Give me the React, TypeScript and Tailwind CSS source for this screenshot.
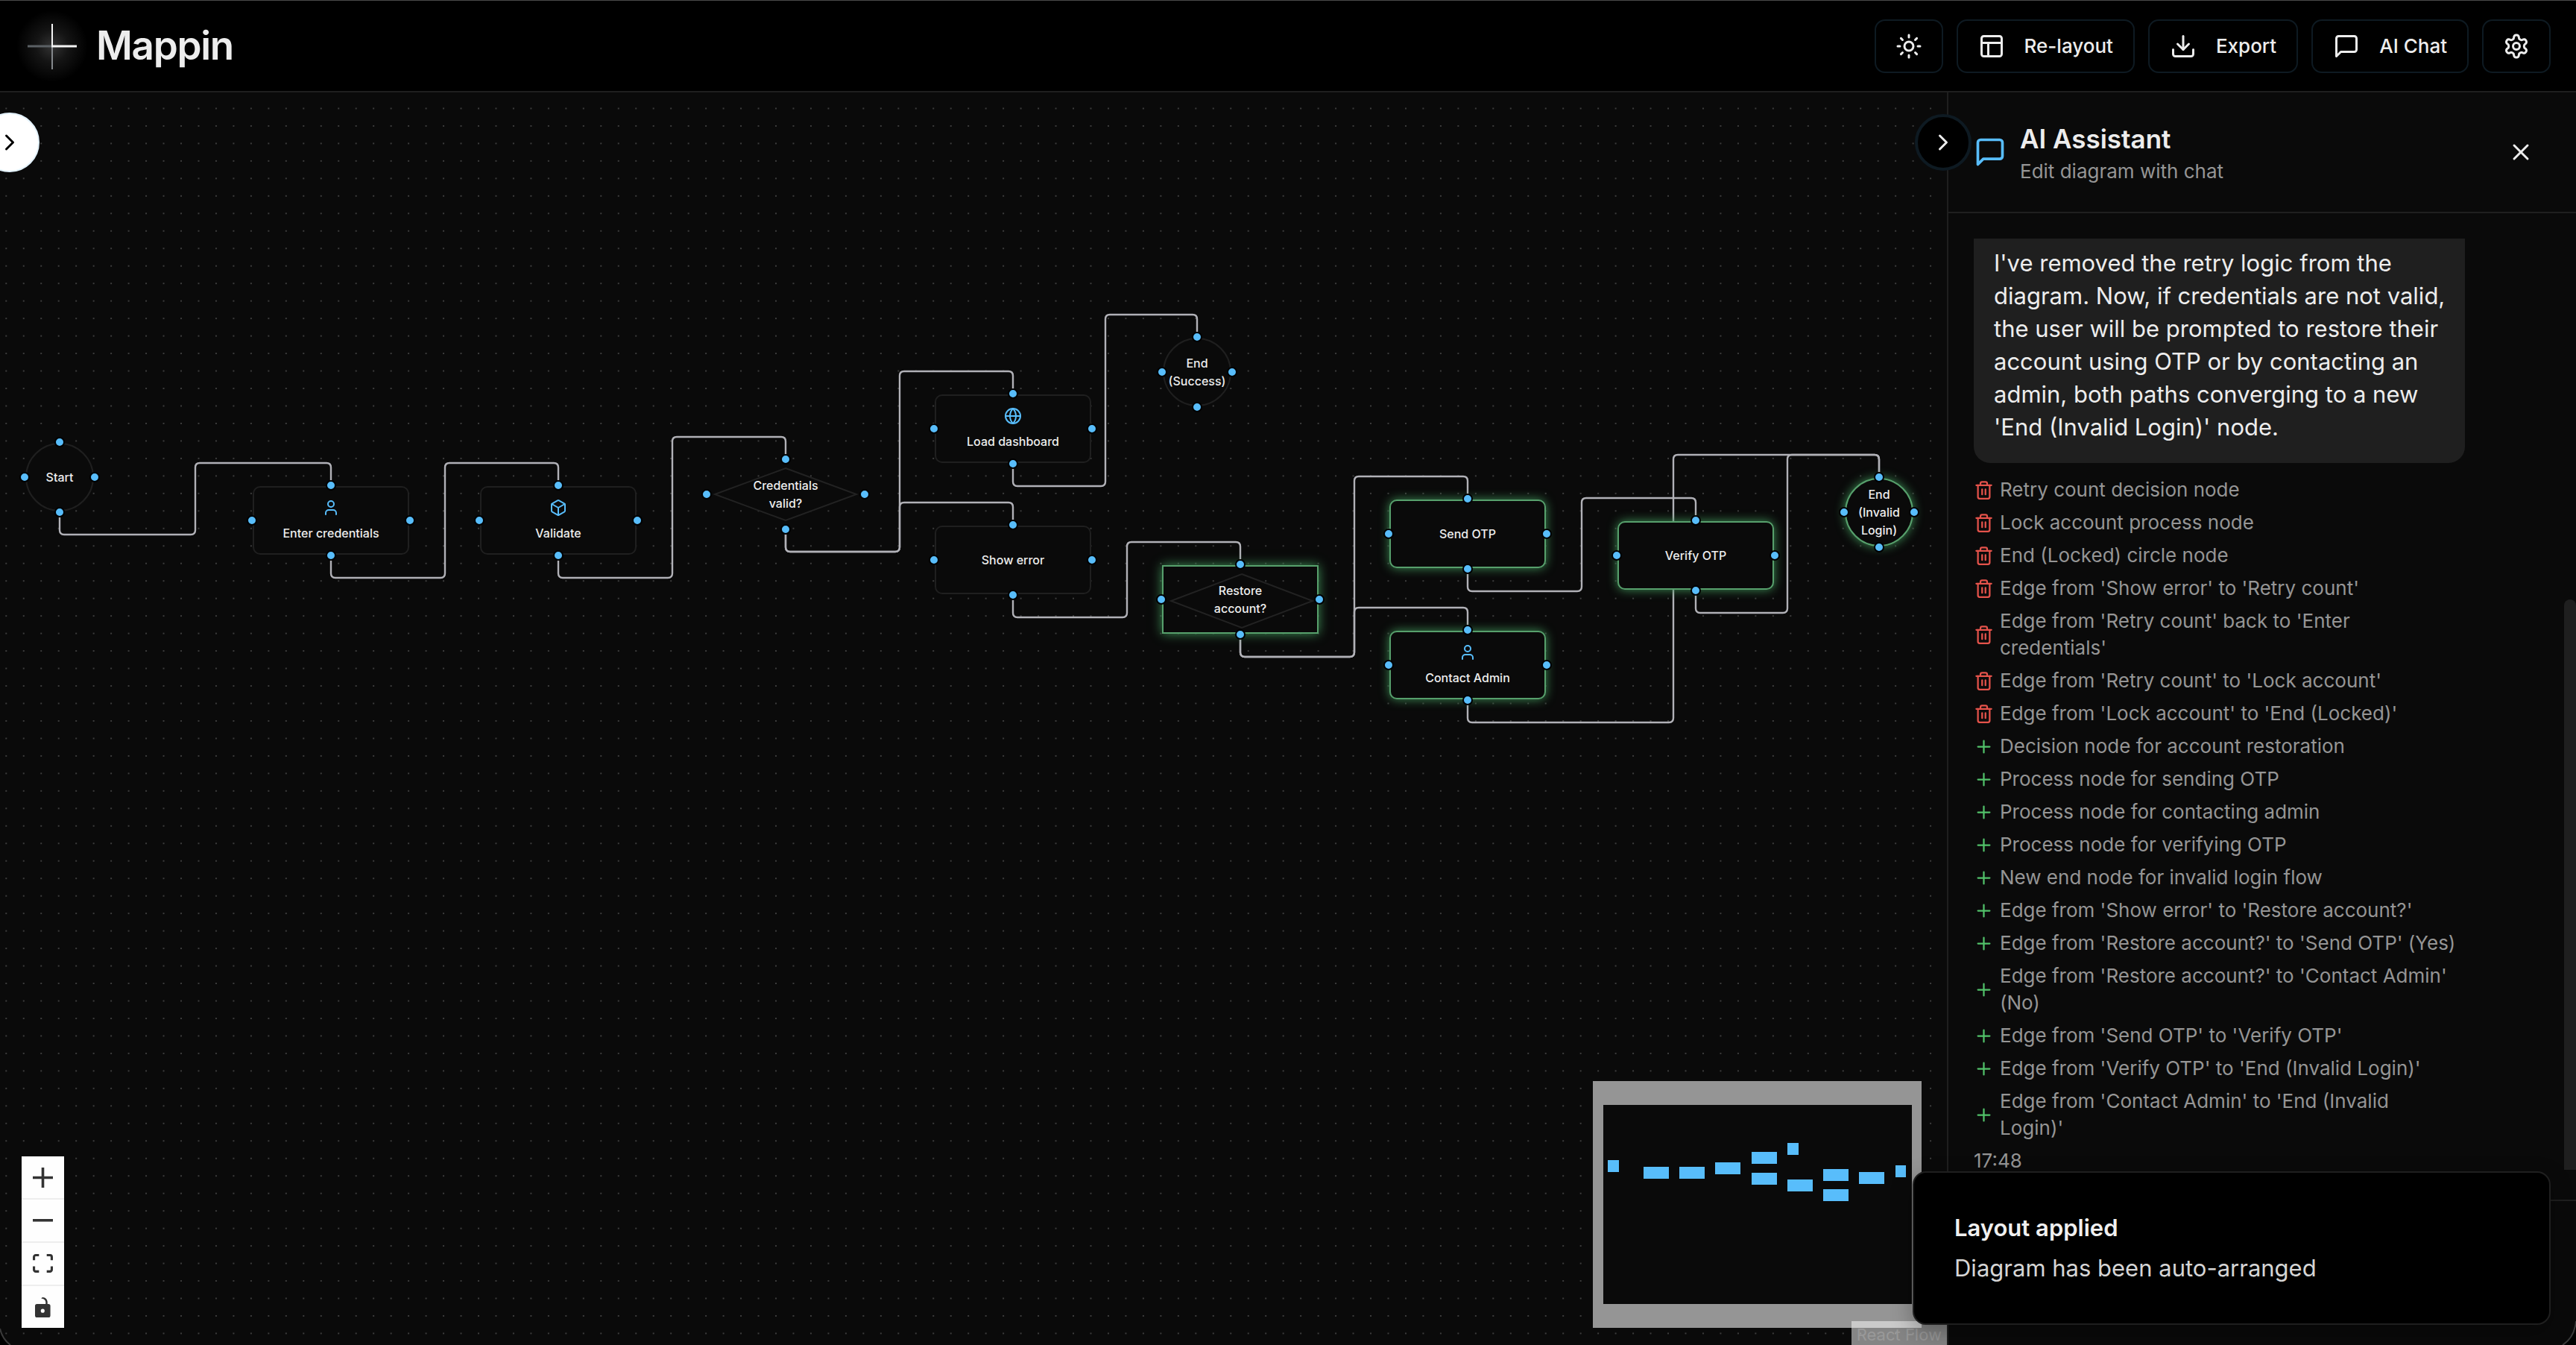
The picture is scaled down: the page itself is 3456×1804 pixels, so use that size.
import React from "react";
import { Box, ChevronRight, Download, Globe, PanelsTopLeft, Plus, Sun, Trash2, User, X } from "lucide-react";

type Shape = "circle" | "box" | "diamond";
type FlowNode = {
  id: string;
  x: number;
  y: number;
  shape: Shape;
  lines: string[];
  icon?: "user" | "box" | "globe";
  added?: boolean;
};

const NODE_W = 212;
const NODE_H = 94;

const nodes: FlowNode[] = [
  { id: "start", x: 80, y: 516, shape: "circle", lines: ["Start"] },
  { id: "enter", x: 444, y: 574, shape: "box", lines: ["Enter credentials"], icon: "user" },
  { id: "validate", x: 749, y: 574, shape: "box", lines: ["Validate"], icon: "box" },
  { id: "valid", x: 1054, y: 539, shape: "diamond", lines: ["Credentials", "valid?"] },
  { id: "load", x: 1359, y: 451, shape: "box", lines: ["Load dashboard"], icon: "globe" },
  { id: "success", x: 1606, y: 375, shape: "circle", lines: ["End", "(Success)"] },
  { id: "error", x: 1359, y: 627, shape: "box", lines: ["Show error"] },
  { id: "restore", x: 1664, y: 680, shape: "diamond", lines: ["Restore", "account?"], added: true },
  { id: "send", x: 1969, y: 592, shape: "box", lines: ["Send OTP"], added: true },
  { id: "contact", x: 1969, y: 768, shape: "box", lines: ["Contact Admin"], icon: "user", added: true },
  { id: "verify", x: 2275, y: 621, shape: "box", lines: ["Verify OTP"], added: true },
  { id: "invalid", x: 2521, y: 563, shape: "circle", lines: ["End", "(Invalid", "Login)"], added: true },
];

const edges: [string, string][] = [
  ["start", "enter"],
  ["enter", "validate"],
  ["validate", "valid"],
  ["valid", "load"],
  ["valid", "error"],
  ["load", "success"],
  ["error", "restore"],
  ["restore", "send"],
  ["restore", "contact"],
  ["send", "verify"],
  ["verify", "invalid"],
  ["contact", "invalid"],
];

// Smooth-step route: down from the source, across, up, across, down into the target.
function edgePath(from: string, to: string) {
  const a = nodes.find((n) => n.id === from)!;
  const b = nodes.find((n) => n.id === to)!;
  const r = 6;
  const mid = Math.round((a.x + b.x) / 2);
  const low = a.y + 77;
  const high = b.y - 77;
  return [
    `M${a.x} ${a.y + 52}V${low - r}Q${a.x} ${low} ${a.x + r} ${low}`,
    `H${mid - r}Q${mid} ${low} ${mid} ${low - r}`,
    `V${high + r}Q${mid} ${high} ${mid + r} ${high}`,
    `H${b.x - r}Q${b.x} ${high} ${b.x} ${high + r}V${b.y - 52}`,
  ].join("");
}

function MessageIcon({ className }: { className: string }) {
  return (
    <svg viewBox="0 0 24 24" fill="none" stroke="currentColor" strokeWidth="2" strokeLinecap="round" strokeLinejoin="round" className={className}>
      <path d="M21 15a2 2 0 0 1-2 2H7l-4 4V5a2 2 0 0 1 2-2h14a2 2 0 0 1 2 2z" />
    </svg>
  );
}

function GearIcon({ className }: { className: string }) {
  return (
    <svg viewBox="0 0 24 24" fill="none" stroke="currentColor" strokeWidth="2" strokeLinecap="round" strokeLinejoin="round" className={className}>
      <path d="M12.22 2h-.44a2 2 0 0 0-2 2v.18a2 2 0 0 1-1 1.73l-.43.25a2 2 0 0 1-2 0l-.15-.08a2 2 0 0 0-2.73.73l-.22.38a2 2 0 0 0 .73 2.73l.15.1a2 2 0 0 1 1 1.72v.51a2 2 0 0 1-1 1.74l-.15.09a2 2 0 0 0-.73 2.73l.22.38a2 2 0 0 0 2.73.73l.15-.08a2 2 0 0 1 2 0l.43.25a2 2 0 0 1 1 1.73V20a2 2 0 0 0 2 2h.44a2 2 0 0 0 2-2v-.18a2 2 0 0 1 1-1.73l.43-.25a2 2 0 0 1 2 0l.15.08a2 2 0 0 0 2.73-.73l.22-.39a2 2 0 0 0-.73-2.73l-.15-.08a2 2 0 0 1-1-1.74v-.5a2 2 0 0 1 1-1.74l.15-.09a2 2 0 0 0 .73-2.73l-.22-.38a2 2 0 0 0-2.73-.73l-.15.08a2 2 0 0 1-2 0l-.43-.25a2 2 0 0 1-1-1.73V4a2 2 0 0 0-2-2z" />
      <circle cx="12" cy="12" r="3" />
    </svg>
  );
}

function Logo() {
  return (
    <svg viewBox="0 0 112 112" className="size-28 shrink-0" aria-hidden="true">
      <defs>
        <radialGradient id="glow">
          <stop offset="0" stopColor="#fff" stopOpacity="0.2" />
          <stop offset="0.45" stopColor="#fff" stopOpacity="0.08" />
          <stop offset="1" stopColor="#fff" stopOpacity="0" />
        </radialGradient>
      </defs>
      <circle cx="56" cy="56" r="48" fill="url(#glow)" />
      <path d="M56 56H23" stroke="#5b6064" strokeWidth="3" />
      <path d="M56 56V87" stroke="#84888c" strokeWidth="2" />
      <path d="M56 57V26" stroke="#f4f4f4" strokeWidth="2" />
      <path d="M55 56H89" stroke="#f4f4f4" strokeWidth="3" />
    </svg>
  );
}

const textButton =
  "flex h-[72px] items-center gap-[26px] rounded-[14px] border-2 border-[#0e1a22] bg-black px-[27px] text-[26px] font-medium text-[#ededed]";
const iconButton =
  "flex h-[72px] w-[92px] items-center justify-center rounded-[14px] border-2 border-[#0e1a22] bg-black text-[#ededed]";

function Header() {
  return (
    <header className="flex h-[124px] shrink-0 items-center justify-between border-t border-b-2 border-t-[#4a4a4a] border-b-[#1f1f1f] bg-black pr-[34px] pl-[14px]">
      <div className="flex items-center gap-[3px]">
        <Logo />
        <h1 className="text-[53px] font-semibold tracking-tight text-[#ededed]">Mappin</h1>
      </div>
      <nav className="flex items-center gap-[18px]">
        <button aria-label="Toggle theme" className={iconButton}>
          <Sun className="size-9" />
        </button>
        <button className={textButton}>
          <PanelsTopLeft className="size-9" />
          Re-layout
        </button>
        <button className={textButton}>
          <Download className="size-9" />
          Export
        </button>
        <button className={textButton}>
          <MessageIcon className="size-9" />
          AI Chat
        </button>
        <button aria-label="Settings" className={iconButton}>
          <GearIcon className="size-9" />
        </button>
      </nav>
    </header>
  );
}

function Handles() {
  const dot = "absolute size-[14px] rounded-full border-2 border-black bg-[#58bdfb]";
  return (
    <>
      <span className={`${dot} -top-[7px] left-1/2 -ml-[7px]`} />
      <span className={`${dot} -bottom-[7px] left-1/2 -ml-[7px]`} />
      <span className={`${dot} top-1/2 -left-[7px] -mt-[7px]`} />
      <span className={`${dot} top-1/2 -right-[7px] -mt-[7px]`} />
    </>
  );
}

function NodeIcon({ icon }: { icon: FlowNode["icon"] }) {
  if (icon === "user") return <User className="size-6 text-[#58bdfb]" />;
  if (icon === "box") return <Box className="size-6 text-[#58bdfb]" />;
  if (icon === "globe") return <Globe className="size-6 text-[#58bdfb]" />;
  return null;
}

function DiagramNode({ node }: { node: FlowNode }) {
  const w = node.shape === "circle" ? NODE_H : NODE_W;
  const frame =
    node.shape === "diamond"
      ? node.added
        ? "border-2 border-[#57a06c] shadow-[0_0_14px_#3f8f57]"
        : ""
      : node.added
        ? "border-2 border-[#57a06c] bg-[#0a0a0a] shadow-[0_0_14px_#3f8f57]"
        : "border-2 border-[#1f1f1f] bg-[#0a0a0a]";
  const corner = node.shape === "circle" ? "rounded-full" : node.shape === "box" ? "rounded-[10px]" : "";
  return (
    <div className="absolute" style={{ left: node.x - w / 2, top: node.y - NODE_H / 2, width: w, height: NODE_H }}>
      <div className={`absolute inset-px ${frame} ${corner}`} />
      {node.shape === "diamond" && (
        <svg viewBox="0 0 212 94" className="absolute inset-0 size-full">
          <path d={node.added ? "M108 13L203 49L108 85L13 49Z" : "M106 12L201 47L106 82L11 47Z"} fill="#0a0a0a" stroke="#222" strokeWidth="2" />
        </svg>
      )}
      <div className="relative flex h-full flex-col items-center justify-center gap-[10px] text-center text-[16px] leading-6 font-medium text-[#ededed]">
        <NodeIcon icon={node.icon} />
        <p>
          {node.lines.map((l) => (
            <span key={l} className="block">
              {l}
            </span>
          ))}
        </p>
      </div>
      <Handles />
    </div>
  );
}

function Controls() {
  const cell = "flex h-[58px] w-[57px] items-center justify-center border-b-2 border-[#eeeeee] bg-[#fefefe] fill-[#333]";
  return (
    <div className="absolute bottom-[23px] left-[29px] flex flex-col">
      <button aria-label="Zoom in" className={cell}>
        <svg viewBox="0 0 32 32" className="w-[27px]">
          <path d="M32 18.133H18.133V32h-4.266V18.133H0v-4.266h13.867V0h4.266v13.867H32z" />
        </svg>
      </button>
      <button aria-label="Zoom out" className={cell}>
        <svg viewBox="0 0 32 5" className="w-[27px]">
          <path d="M0 0h32v4.2H0z" />
        </svg>
      </button>
      <button aria-label="Fit view" className={cell}>
        <svg viewBox="0 0 32 30" className="w-[27px]">
          <path d="M3.692 4.63c0-.53.4-.938.939-.938h5.215V0H4.708C2.13 0 0 2.054 0 4.63v5.216h3.692V4.631zM27.354 0h-5.2v3.692h5.17c.53 0 .984.4.984.939v5.215H32V4.631A4.624 4.624 0 0027.354 0zm.954 24.83c0 .532-.4.94-.939.94h-5.215v3.768h5.215c2.577 0 4.631-2.13 4.631-4.707v-5.139h-3.692v5.139zm-23.677.94c-.531 0-.939-.4-.939-.94v-5.138H0v5.139c0 2.577 2.13 4.707 4.708 4.707h5.138V25.77H4.631z" />
        </svg>
      </button>
      <button aria-label="Toggle interactivity" className="flex h-14 w-[57px] items-center justify-center bg-[#fefefe] fill-[#333]">
        <svg viewBox="0 0 25 32" className="h-[27px]">
          <path d="M21.333 10.667H19.81V7.619C19.81 3.429 16.38 0 12.19 0c-4.114 1.828-1.37 2.133.305 2.438 1.676.305 4.42 2.59 4.42 5.181v3.048H3.047A3.056 3.056 0 000 13.714v15.238A3.056 3.056 0 003.048 32h18.285a3.056 3.056 0 003.048-3.048V13.714a3.056 3.056 0 00-3.048-3.047zM12.19 24.533a3.056 3.056 0 01-3.047-3.047 3.056 3.056 0 013.047-3.048 3.056 3.056 0 013.048 3.048 3.056 3.056 0 01-3.048 3.047z" />
        </svg>
      </button>
    </div>
  );
}

const miniNodes: [number, number, number][] = [
  [20, 106, 15],
  [68, 115, 34],
  [116, 115, 34],
  [164, 109, 34],
  [213, 95, 34],
  [213, 123, 34],
  [261, 83, 15],
  [261, 132, 34],
  [309, 118, 34],
  [309, 145, 34],
  [357, 122, 34],
  [406, 113, 14],
];

function MiniMap() {
  return (
    <svg viewBox="0 0 441 331" className="absolute right-[34px] bottom-[23px] h-[331px] w-[441px]" role="img" aria-label="Mini map">
      <rect width="441" height="331" fill="#959595" />
      <rect x="14" y="32" width="414" height="267" fill="#0a0a0a" />
      {miniNodes.map(([x, y, w], i) => (
        <rect key={i} x={x} y={y} width={w} height="16" fill="#58bdfb" />
      ))}
    </svg>
  );
}

function Canvas() {
  return (
    <main className="relative min-w-0 flex-1 overflow-hidden">
      <svg className="absolute inset-0 size-full" aria-hidden="true">
        <defs>
          <pattern id="dots" x="7.3" y="20.5" width="23.471" height="23.471" patternUnits="userSpaceOnUse">
            <circle cx="1" cy="1" r="0.9" fill="#555" />
          </pattern>
        </defs>
        <rect width="100%" height="100%" fill="url(#dots)" />
        {edges.map(([a, b]) => (
          <path key={a + b} d={edgePath(a, b)} fill="none" stroke="#b1b1b7" strokeWidth="2.4" />
        ))}
      </svg>
      {nodes.map((n) => (
        <DiagramNode key={n.id} node={n} />
      ))}
      <button
        aria-label="Open sidebar"
        className="absolute top-[27px] -left-[27px] flex size-20 items-center justify-center rounded-full border-2 border-[#e3f2fc] bg-white text-black"
      >
        <ChevronRight className="size-9" />
      </button>
      <Controls />
      <MiniMap />
      <a
        href="https://reactflow.dev"
        className="absolute right-0 bottom-0 flex h-8 items-center bg-white/50 px-[7px] pt-1 text-[22px] leading-7 text-[#999]"
      >
        React Flow
      </a>
    </main>
  );
}

const removed = [
  "Retry count decision node",
  "Lock account process node",
  "End (Locked) circle node",
  "Edge from 'Show error' to 'Retry count'",
  "Edge from 'Retry count' back to 'Enter\ncredentials'",
  "Edge from 'Retry count' to 'Lock account'",
  "Edge from 'Lock account' to 'End (Locked)'",
];

const added = [
  "Decision node for account restoration",
  "Process node for sending OTP",
  "Process node for contacting admin",
  "Process node for verifying OTP",
  "New end node for invalid login flow",
  "Edge from 'Show error' to 'Restore account?'",
  "Edge from 'Restore account?' to 'Send OTP' (Yes)",
  "Edge from 'Restore account?' to 'Contact Admin'\n(No)",
  "Edge from 'Send OTP' to 'Verify OTP'",
  "Edge from 'Verify OTP' to 'End (Invalid Login)'",
  "Edge from 'Contact Admin' to 'End (Invalid\nLogin)'",
];

function ChatPanel() {
  return (
    <aside className="relative flex w-[844px] shrink-0 flex-col border-l-2 border-[#1f1f1f]">
      <div className="flex h-[162px] shrink-0 items-center justify-between border-b-2 border-[#1f1f1f] pr-[38px] pl-[34px]">
        <div className="flex items-center gap-[18px]">
          <MessageIcon className="size-11 text-[#58bdfb]" />
          <div className="pt-1">
            <h2 className="text-[35px] leading-[48px] font-semibold text-[#ededed]">AI Assistant</h2>
            <p className="text-[26px] leading-10 text-[#959595]">Edit diagram with chat</p>
          </div>
        </div>
        <button aria-label="Close chat" className="flex size-[72px] items-center justify-center text-[#ededed]">
          <X className="size-9" />
        </button>
      </div>

      <div className="flex min-h-0 flex-1 flex-col overflow-hidden px-[34px] py-[34px]">
        <div className="w-[659px]">
          <p className="rounded-b-[22px] bg-[#1f1f1f] pt-[11px] pr-5 pb-[26px] pl-[27px] text-[31px] leading-[44px] text-[#ededed]">
            I've removed the retry logic from the diagram. Now, if credentials are not valid, the user will be prompted to
            restore their account using OTP or by contacting an admin, both paths converging to a new 'End (Invalid
            Login)' node.
          </p>
          <ul className="mt-[18px] flex flex-col gap-2 text-[26px] leading-9 text-[#959595]">
            {removed.map((t) => (
              <li key={t} className="flex items-center gap-2">
                <Trash2 className="size-[27px] shrink-0 text-[#e5534b]" />
                <span className="whitespace-pre-line">{t}</span>
              </li>
            ))}
            {added.map((t) => (
              <li key={t} className="flex items-center gap-2">
                <Plus className="size-[27px] shrink-0 text-[#52c26a]" />
                <span className="whitespace-pre-line">{t}</span>
              </li>
            ))}
          </ul>
          <p className="mt-2 text-[26px] leading-9 text-[#959595]">17:48</p>
        </div>
      </div>
      <div className="absolute top-[680px] right-0 bottom-[235px] w-4 rounded-t-full bg-[#1f1f1f]" />
      <div className="h-[195px] shrink-0 border-t-2 border-[#1f1f1f]" />

      <button
        aria-label="Collapse chat"
        className="absolute top-[29px] -left-[45px] flex size-[76px] items-center justify-center rounded-full border-4 border-[#0e1a22] bg-black text-[#ededed]"
      >
        <ChevronRight className="size-9" />
      </button>
    </aside>
  );
}

function Toast() {
  return (
    <div
      role="status"
      className="absolute right-[34px] bottom-[27px] flex h-[206px] w-[856px] flex-col justify-center rounded-[18px] border-2 border-[#1f1f1f] bg-black px-[54px] shadow-[0_10px_30px_rgba(0,0,0,0.3)]"
    >
      <p className="text-[31px] leading-[54px] font-semibold text-[#f0f0f0]">Layout applied</p>
      <p className="text-[31px] leading-[54px] text-[#d5d5d5]">Diagram has been auto-arranged</p>
    </div>
  );
}

export default function App() {
  return (
    <div className="relative flex h-screen flex-col overflow-hidden bg-[#0a0a0a] font-['Inter',sans-serif]">
      <Header />
      <div className="flex min-h-0 flex-1">
        <Canvas />
        <ChatPanel />
      </div>
      <Toast />
      <svg viewBox="0 0 24 36" className="absolute bottom-0 left-0 h-9 w-6" aria-hidden="true">
        <path d="M0 14Q3 28 14 36H0Z" fill="#000" />
        <path d="M0 14Q3 28 14 36" fill="none" stroke="#3a3a3a" strokeWidth="2" />
      </svg>
      <svg viewBox="0 0 24 36" className="absolute right-0 bottom-0 h-9 w-6" aria-hidden="true">
        <path d="M24 4Q22 26 6 36H24Z" fill="#000" />
        <path d="M24 4Q22 26 6 36" fill="none" stroke="#3a3a3a" strokeWidth="2" />
      </svg>
    </div>
  );
}
